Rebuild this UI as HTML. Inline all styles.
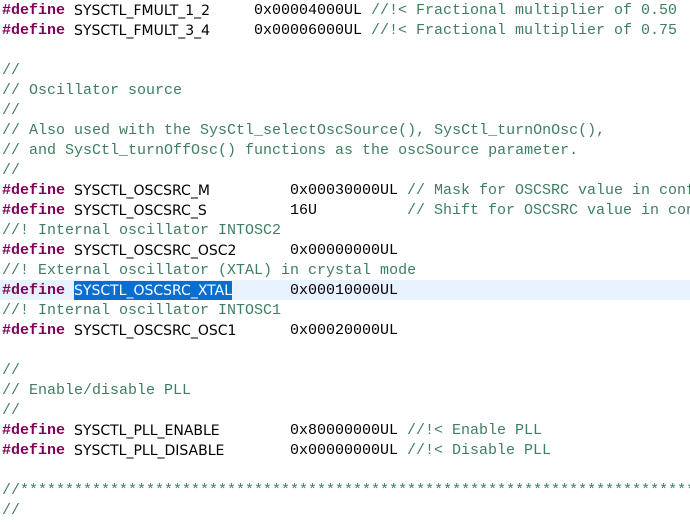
<!DOCTYPE html>
<html><head><meta charset="utf-8"><style>
body{margin:0;width:690px;height:509px;overflow:hidden;background:#fff;position:relative;font-size:15px}
.l{position:absolute;left:0;width:690px;height:20px;line-height:22px;white-space:pre}
.l span{position:absolute;top:0}
.d{color:#7f0055;font-weight:bold;font-family:"Liberation Mono",monospace;left:2px}
.i{color:#000;font-family:"DejaVu Sans","Liberation Sans",sans-serif;font-size:14px;left:74px}
.v{color:#000;font-family:"Liberation Mono",monospace}
.c{color:#3f7f5f;font-family:"Liberation Mono",monospace}
.cur{background:#e8f2fe}
.sel{background:#0a6ed1;color:#fff!important;height:19px;top:1px!important;line-height:20px}
</style></head><body>
<div class="l" style="top:0"><span class="d">#define</span><span class="i">SYSCTL_FMULT_1_2</span><span class="v" style="left:254px">0x00004000UL</span><span class="c" style="left:371px">//!&lt; Fractional multiplier of 0.50</span></div>
<div class="l" style="top:20px"><span class="d">#define</span><span class="i">SYSCTL_FMULT_3_4</span><span class="v" style="left:254px">0x00006000UL</span><span class="c" style="left:371px">//!&lt; Fractional multiplier of 0.75</span></div>
<div class="l" style="top:60px"><span class="c" style="left:2px">//</span></div>
<div class="l" style="top:80px"><span class="c" style="left:2px">// Oscillator source</span></div>
<div class="l" style="top:100px"><span class="c" style="left:2px">//</span></div>
<div class="l" style="top:120px"><span class="c" style="left:2px">// Also used with the SysCtl_selectOscSource(), SysCtl_turnOnOsc(),</span></div>
<div class="l" style="top:140px"><span class="c" style="left:2px">// and SysCtl_turnOffOsc() functions as the oscSource parameter.</span></div>
<div class="l" style="top:160px"><span class="c" style="left:2px">//</span></div>
<div class="l" style="top:180px"><span class="d">#define</span><span class="i">SYSCTL_OSCSRC_M</span><span class="v" style="left:290px">0x00030000UL</span><span class="c" style="left:407px">// Mask for OSCSRC value in config</span></div>
<div class="l" style="top:200px"><span class="d">#define</span><span class="i">SYSCTL_OSCSRC_S</span><span class="v" style="left:290px">16U</span><span class="c" style="left:407px">// Shift for OSCSRC value in config</span></div>
<div class="l" style="top:220px"><span class="c" style="left:2px">//! Internal oscillator INTOSC2</span></div>
<div class="l" style="top:240px"><span class="d">#define</span><span class="i">SYSCTL_OSCSRC_OSC2</span><span class="v" style="left:290px">0x00000000UL</span></div>
<div class="l" style="top:260px"><span class="c" style="left:2px">//! External oscillator (XTAL) in crystal mode</span></div>
<div class="l cur" style="top:280px"><span class="d">#define</span><span class="i sel">SYSCTL_OSCSRC_XTAL</span><span class="v" style="left:290px">0x00010000UL</span></div>
<div class="l" style="top:300px"><span class="c" style="left:2px">//! Internal oscillator INTOSC1</span></div>
<div class="l" style="top:320px"><span class="d">#define</span><span class="i">SYSCTL_OSCSRC_OSC1</span><span class="v" style="left:290px">0x00020000UL</span></div>
<div class="l" style="top:360px"><span class="c" style="left:2px">//</span></div>
<div class="l" style="top:380px"><span class="c" style="left:2px">// Enable/disable PLL</span></div>
<div class="l" style="top:400px"><span class="c" style="left:2px">//</span></div>
<div class="l" style="top:420px"><span class="d">#define</span><span class="i">SYSCTL_PLL_ENABLE</span><span class="v" style="left:290px">0x80000000UL</span><span class="c" style="left:407px">//!&lt; Enable PLL</span></div>
<div class="l" style="top:440px"><span class="d">#define</span><span class="i">SYSCTL_PLL_DISABLE</span><span class="v" style="left:290px">0x00000000UL</span><span class="c" style="left:407px">//!&lt; Disable PLL</span></div>
<div class="l" style="top:480px"><span class="c" style="left:2px">//*****************************************************************************</span></div>
<div class="l" style="top:500px"><span class="c" style="left:2px">//</span></div>
</body></html>
